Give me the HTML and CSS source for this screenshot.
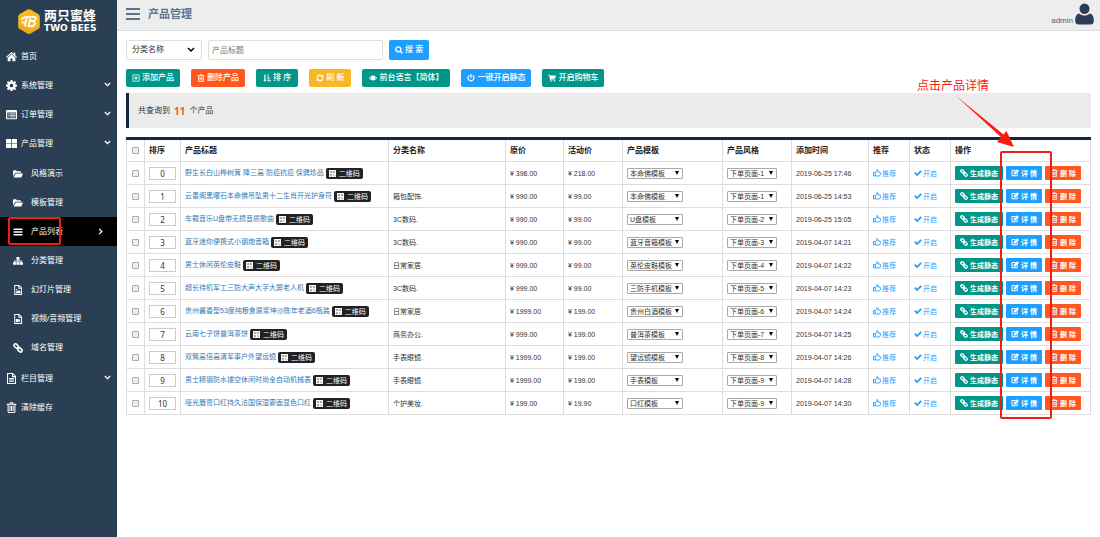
FILE: index.html
```html
<!DOCTYPE html>
<html lang="zh-CN">
<head>
<meta charset="utf-8">
<meta name="viewport" content="width=device-width, initial-scale=1">
<title>产品管理</title>
<link rel="stylesheet" href="styles.css">
</head>
<body>
<svg class="sprite" aria-hidden="true">
  <symbol id="i-home" viewBox="0 0 16 16"><path d="M8 1.500 0 8.600l1 1.100L8 3.600l7 6.100 1-1.100-2.500-2.200V2.300h-2.200v2.100zM8 4.900l-5.600 5V15h4.200v-4h2.800v4h4.200V9.900z"/></symbol>
  <symbol id="i-gear" viewBox="0 0 16 16"><path fill-rule="evenodd" d="M6.700 0h2.600l.4 2.200 1.400.6L13 1.500l1.700 1.800-1.300 1.700.6 1.500 2 .3v2.500l-2 .4-.6 1.500 1.300 1.800-1.800 1.800-1.800-1.300-1.400.6-.4 2.100H6.700l-.4-2.100-1.400-.6-1.800 1.300-1.800-1.800 1.300-1.800L2 9.700l-2-.4V6.800l2-.3.6-1.500-1.300-1.700L3 1.500l1.900 1.300 1.400-.6zM8 5.300a2.700 2.700 0 1 0 0 5.400 2.700 2.700 0 0 0 0-5.400z"/></symbol>
  <symbol id="i-order" viewBox="0 0 16 16"><path fill-rule="evenodd" d="M1 1.500h14l1 1V14l-1 1H1l-1-1V2.500zm.5 3.500v8.500h13V5z"/><path opacity=".75" d="M2 6h2v1.700H2zM5 6h9v1.700H5zM2 8.400h2v1.700H2zM5 8.400h9v1.700H5zM2 10.800h2v1.700H2zM5 10.800h9v1.700H5z"/></symbol>
  <symbol id="i-grid" viewBox="0 0 16 16"><path d="M0 1.500h7.500v6H0zM8.500 1.500H16v6H8.500zM0 8.500h7.500v6H0zM8.500 8.500H16v6H8.500z"/></symbol>
  <symbol id="i-folder" viewBox="0 0 16 16"><path d="M0 11.500V3.200L1 2h4l1 1.700h6l1 1V6H4.500L3 7z"/><path d="M4.500 7.200H16l-2.800 6.300H.8z"/></symbol>
  <symbol id="i-bars" viewBox="0 0 16 16"><path d="M1 2.500h14v2.300H1zM1 6.900h14v2.300H1zM1 11.300h14v2.300H1z"/></symbol>
  <symbol id="i-tree" viewBox="0 0 16 16"><path d="M5.500 1.500h5v4.300H8.700v1.500H14v2.500h2V14h-5V9.800h1.700V8.600H8.700v1.200h1.800V14h-5V9.800h1.800V8.600h-4v1.200H5V14H0V9.800h2V7.300h5.300V5.800H5.500z"/></symbol>
  <symbol id="i-image" viewBox="0 0 16 16"><path fill-rule="evenodd" d="M2 0h8l4.500 4.500V16H2zm1.500 1.500v13H13V6H8.500V1.500zM10 2v2.500h2.500z"/><path d="M4.500 13v-2l1.600-1.500 1.200 1L9.800 8l2.200 2.500V13zM6 6.500a1.200 1.200 0 1 1-.1 2.400A1.200 1.200 0 0 1 6 6.500z"/></symbol>
  <symbol id="i-video" viewBox="0 0 16 16"><path fill-rule="evenodd" d="M2 0h8l4.500 4.500V16H2zm1.500 1.500v13H13V6H8.500V1.500zM10 2v2.500h2.500z"/><path d="M4.500 8h4.300v1.700L11.500 8v5l-2.700-1.700V13H4.500z"/></symbol>
  <symbol id="i-link" viewBox="0 0 16 16"><g fill="none" stroke="currentColor" stroke-width="2.500"><rect x="1.200" y="2.300" width="7.400" height="5" rx="2.200" transform="rotate(42 5 5)"/><rect x="7.400" y="8.500" width="7.400" height="5" rx="2.200" transform="rotate(42 11 11)"/><path d="m6.300 6.300 3.500 3.500"/></g></symbol>
  <symbol id="i-doc" viewBox="0 0 16 16"><path fill-rule="evenodd" d="M1.500 0H10l4.500 4.500V16h-13zM3 1.500v13h10V6H8.700V1.500zM10.200 2v2.500h2.500z"/><path d="M4.500 7.300h7v1.300h-7zM4.500 9.600h7v1.300h-7zM4.500 11.900h7v1.300h-7z"/></symbol>
  <symbol id="i-trash" viewBox="0 0 16 16"><path fill-rule="evenodd" d="M5 2.500 5.800.5h4.400l.8 2h4V4h-1.300v10.500l-1.200 1.500h-9l-1.200-1.500V4H1V2.500zm1.700 0h2.600L9 1.900H7zM3.800 4v10.500h8.400V4z"/><path d="M5 5.500h1.500V13H5zM7.300 5.500h1.500V13H7.300zM9.600 5.500h1.500V13H9.600z"/></symbol>
  <symbol id="i-plus" viewBox="0 0 16 16"><path fill-rule="evenodd" d="M2 1h12l1 1v12l-1 1H2l-1-1V2zm.6 1.600v10.800h10.800V2.600z"/><path d="M7.200 4h1.600v3.200H12v1.600H8.800V12H7.200V8.800H4V7.200h3.200z"/></symbol>
  <symbol id="i-sort" viewBox="0 0 16 16"><path d="M2.700 1h2.300v10.300h2.500L3.900 15.700.2 11.300h2.500zM8.500 1h3v2h-3zM8.500 4.800h4v2h-4zM8.500 8.600h5.500v2H8.500zM8.500 12.400H16v2H8.500z"/></symbol>
  <symbol id="i-refresh" viewBox="0 0 16 16"><path d="M.8 7A7.300 7.300 0 0 1 13 2.800L15 1v5.800H9.200l2-2.100A4.800 4.800 0 0 0 3.500 7zM15.200 9A7.300 7.300 0 0 1 3 13.200L1 15V9.200h5.800l-2 2.100A4.800 4.800 0 0 0 12.500 9z"/></symbol>
  <symbol id="i-eye" viewBox="0 0 16 16"><path fill-rule="evenodd" d="M0 8c2-3.200 4.700-5 8-5s6 1.800 8 5c-2 3.200-4.700 5-8 5s-6-1.800-8-5zm1.800 0c.9 1.300 2 2.300 3.200 2.900A4 4 0 0 1 5 5c-1.300.6-2.400 1.700-3.200 3zm12.400 0A8 8 0 0 0 11 5a4 4 0 0 1 0 5.900c1.300-.6 2.400-1.600 3.200-2.900z"/></symbol>
  <symbol id="i-power" viewBox="0 0 16 16"><path d="M6.800 0h2.400v8H6.800z"/><path d="M4.500 1.300v3a4.800 4.800 0 1 0 7 0v-3a7.200 7.200 0 1 1-7 0z"/></symbol>
  <symbol id="i-cart" viewBox="0 0 16 16"><path d="M0 1.500h3.300l.5 1.700H16L14.600 9l-9 1 .2 1.200h8.700v1.500H4.500L2.200 3H0z"/><circle cx="5.800" cy="14" r="1.500"/><circle cx="13" cy="14" r="1.500"/></symbol>
  <symbol id="i-search" viewBox="0 0 16 16"><path fill-rule="evenodd" d="M6.700.3a6.400 6.400 0 0 1 5.400 9.800l3.800 3.800-2 2-3.800-3.800A6.400 6.400 0 1 1 6.700.3zm0 2.600a3.800 3.800 0 1 0 0 7.600 3.800 3.800 0 0 0 0-7.600z"/></symbol>
  <symbol id="i-thumb" viewBox="0 0 16 16"><path fill="none" stroke="currentColor" stroke-width="1.800" d="M1 7h3.500v7H1zM4.500 7.500C7 5.500 7.500 4 7.800 1.200c2 0 2.700 1.800 1.700 4.800H14l1 1.500-.7 4.500-1.300 2H7l-2.500-1"/></symbol>
  <symbol id="i-check" viewBox="0 0 16 16"><path d="m.3 8.500 2.500-2.500 3.400 3.400L13.200 2.300l2.500 2.500-9.500 9.500z"/></symbol>
  <symbol id="i-edit" viewBox="0 0 16 16"><path d="M1 3.500 2.500 2H10L8.300 3.800H3v8.700h8.700V9.500l1.800-1.800V13L12 14.500H2.500L1 13z"/><path d="m5.500 7.500 7-7L16 4l-7 7H5.500z"/></symbol>
  <symbol id="i-qr" viewBox="0 0 16 16"><path fill="#fff" d="M0 0h16v16H0z"/><path fill="#999" d="M2 2h5v5H2zM9 2h5v5H9zM2 9h5v5H2zM9 9h2v2H9zM12 11h2v3h-2zM9 13h2v1H9z"/><path fill="#eee" d="M3.500 3.500h2v2h-2zM10.500 3.500h2v2h-2zM3.500 10.500h2v2h-2z"/></symbol>
  <symbol id="i-down" viewBox="0 0 16 16"><path fill="none" stroke="currentColor" stroke-width="3" d="m2 4.500 6 6 6-6"/></symbol>
  <symbol id="i-right" viewBox="0 0 16 16"><path fill="none" stroke="currentColor" stroke-width="3" d="m5 2 6 6-6 6"/></symbol>
</svg>

<div class="app">
  <aside class="sidebar">
    <div class="logo">
      <svg class="logo-mark" viewBox="0 0 22 25" aria-hidden="true">
        <path fill="#f9b625" d="M9.500.6q1.500-.8 3 0l7.700 4.300q1.600 1 1.600 2.700v9.800q0 1.700-1.600 2.700l-7.700 4.300q-1.500.8-3 0l-7.700-4.300q-1.600-1-1.600-2.700V7.600q0-1.700 1.600-2.700z"/>
        <path fill="#e89b1c" d="m.2 15 0 2.400q0 1.700 1.600 2.700l7.700 4.300q1.500.8 3 0l7.700-4.300q1.600-1 1.600-2.700L12 21z" opacity=".6"/>
        <path fill="none" stroke="#fff" stroke-width="1.800" stroke-linecap="round" stroke-linejoin="round" d="M3.800 10c1.500-2 3-2.200 5-2.200h7.500c2.600.2 2.200 3.500-.8 4.200h-2.300 1.600c3.300.4 2.500 5-1.600 5.200h-2.800l1.800-7.200M8.800 8.500 7 16.500M4.800 13.500h2"/>
      </svg>
      <div class="logo-text"><span class="logo-cn">两只蜜蜂</span><span class="logo-en">TWO BEES</span></div>
    </div>
    <nav aria-label="主菜单">
      <ul class="menu">
        <li><a class="menu-link" href="#"><svg class="icon"><use href="#i-home"/></svg><span>首页</span></a></li>
        <li><a class="menu-link" href="#"><svg class="icon"><use href="#i-gear"/></svg><span>系统管理</span><svg class="caret"><use href="#i-down"/></svg></a></li>
        <li><a class="menu-link" href="#"><svg class="icon"><use href="#i-order"/></svg><span>订单管理</span><svg class="caret"><use href="#i-down"/></svg></a></li>
        <li><a class="menu-link" href="#"><svg class="icon"><use href="#i-grid"/></svg><span>产品管理</span><svg class="caret"><use href="#i-down"/></svg></a>
          <ul class="submenu">
            <li><a class="menu-link" href="#"><svg class="icon"><use href="#i-folder"/></svg><span>风格演示</span></a></li>
            <li><a class="menu-link" href="#"><svg class="icon"><use href="#i-folder"/></svg><span>模板管理</span></a></li>
            <li class="active"><a class="menu-link" href="#" aria-current="page"><svg class="icon"><use href="#i-bars"/></svg><span>产品列表</span><svg class="caret"><use href="#i-right"/></svg></a><span class="mark mark-menu"></span></li>
            <li><a class="menu-link" href="#"><svg class="icon"><use href="#i-tree"/></svg><span>分类管理</span></a></li>
            <li><a class="menu-link" href="#"><svg class="icon"><use href="#i-image"/></svg><span>幻灯片管理</span></a></li>
            <li><a class="menu-link" href="#"><svg class="icon"><use href="#i-video"/></svg><span>视频/音频管理</span></a></li>
            <li><a class="menu-link" href="#"><svg class="icon"><use href="#i-link"/></svg><span>域名管理</span></a></li>
          </ul>
        </li>
        <li><a class="menu-link" href="#"><svg class="icon"><use href="#i-doc"/></svg><span>栏目管理</span><svg class="caret"><use href="#i-down"/></svg></a></li>
        <li><a class="menu-link" href="#"><svg class="icon"><use href="#i-trash"/></svg><span>清除缓存</span></a></li>
      </ul>
    </nav>
  </aside>

  <div class="page">
    <header class="topbar">
      <button class="toggle" type="button" aria-label="切换菜单"><span></span><span></span><span></span></button>
      <h1>产品管理</h1>
      <a class="user" href="#"><span>admin</span>
        <svg class="avatar" viewBox="0 0 20 22" aria-hidden="true"><path d="M10 0a5.300 5.500 0 1 1 0 11A5.300 5.500 0 0 1 10 0zM4.500 10.500C6 12 8 12.700 10 12.700s4-.7 5.500-2.200c3 .3 4.300 3.500 4.300 7.500 0 2.500-1 4-3.500 4H3.700C1.200 22 .2 20.500.2 18c0-4 1.300-7.200 4.300-7.500z"/></svg>
      </a>
    </header>

    <main class="content">
      <form class="search">
        <select class="field category" aria-label="分类名称"><option>分类名称</option></select>
        <input class="field keyword" type="text" placeholder="产品标题" aria-label="产品标题">
        <button class="btn blue" type="button"><svg class="icon"><use href="#i-search"/></svg>搜 索</button>
      </form>
      <div class="toolbar">
        <button class="btn green" type="button"><svg class="icon"><use href="#i-plus"/></svg>添加产品</button>
        <button class="btn red" type="button"><svg class="icon"><use href="#i-trash"/></svg>删除产品</button>
        <button class="btn green wide" type="button"><svg class="icon"><use href="#i-sort"/></svg>排 序</button>
        <button class="btn yellow wide" type="button"><svg class="icon"><use href="#i-refresh"/></svg>刷 新</button>
        <button class="btn green wide" type="button"><svg class="icon"><use href="#i-eye"/></svg>前台语言【简体】</button>
        <button class="btn blue" type="button"><svg class="icon"><use href="#i-power"/></svg>一键开启静态</button>
        <button class="btn green" type="button"><svg class="icon"><use href="#i-cart"/></svg>开启购物车</button>
      </div>
      <p class="summary">共查询到 <strong>11</strong> 个产品</p>

      <table class="products">
        <colgroup>
          <col class="c-check"><col class="c-order"><col class="c-title"><col class="c-cat"><col class="c-price"><col class="c-sale"><col class="c-tpl"><col class="c-style"><col class="c-date"><col class="c-rec"><col class="c-state"><col class="c-ops">
        </colgroup>
        <thead>
          <tr><th class="center"><input type="checkbox" aria-label="全选"></th><th>排序</th><th>产品标题</th><th>分类名称</th><th>原价</th><th>活动价</th><th>产品模板</th><th>产品风格</th><th>添加时间</th><th>推荐</th><th>状态</th><th>操作</th></tr>
        </thead>
        <tbody id="rows"></tbody>
      </table>
    </main>
  </div>

  <div class="mark mark-column"></div>
  <div class="note">
    <p>点击产品详情</p>
    <svg class="arrow" viewBox="0 0 60 53" aria-hidden="true"><path d="M.5.5 46 42l-4 5 17 5-7.500-16-3 3.500z"/></svg>
  </div>
</div>
<script src="rows.js"></script>
</body>
</html>
```

FILE: rows.js
```js
const products = [
  ["野生长白山桦树茸 降三高 防癌抗癌 保健珍品", "", "398.00", "218.00", "本命佛模板", 1, "2019-06-25 17:46"],
  ["云善阁黑曜石本命佛吊坠男十二生肖开光护身符", "箱包配饰.", "990.00", "99.00", "本命佛模板", 1, "2019-06-25 14:53"],
  ["车载音乐U盘带无损音质歌曲", "3C数码.", "990.00", "99.00", "U盘模板", 2, "2019-06-25 15:05"],
  ["蓝牙迷你便携式小钢炮音箱", "3C数码.", "990.00", "99.00", "蓝牙音箱模板", 3, "2019-04-07 14:21"],
  ["男士休闲英伦皮鞋", "日常家居.", "999.00", "99.00", "英伦皮鞋模板", 4, "2019-04-07 14:22"],
  ["超长待机军工三防大声大字大屏老人机", "3C数码.", "999.00", "99.00", "三防手机模板", 5, "2019-04-07 14:23"],
  ["贵州酱香型53度纯粮食原浆坤沙陈年老酒6瓶装", "日常家居.", "1999.00", "199.00", "贵州白酒模板", 6, "2019-04-07 14:24"],
  ["云南七子饼普洱茶饼", "商务办公.", "999.00", "199.00", "普洱茶模板", 7, "2019-04-07 14:25"],
  ["双筒高倍高清军事户外望远镜", "手表眼镜.", "1999.00", "199.00", "望远镜模板", 8, "2019-04-07 14:26"],
  ["男士精钢防水镂空休闲时尚全自动机械表", "手表眼镜.", "1999.00", "199.00", "手表模板", 9, "2019-04-07 14:28"],
  ["哑光唇膏口红持久法国保湿雾面显色口红", "个护美妆.", "199.00", "19.90", "口红模板", 9, "2019-04-07 14:30"]
];

const icon = name => `<svg class="icon" aria-hidden="true"><use href="#i-${name}"/></svg>`;

document.getElementById("rows").innerHTML = products.map(
  ([title, category, price, sale, template, style, date], i) => `
  <tr>
    <td class="center"><input type="checkbox" aria-label="选择 ${title}"></td>
    <td><input class="order" type="text" value="${i}" aria-label="排序"></td>
    <td><a href="#">${title}</a> <button class="qr" type="button">${icon("qr")}二维码</button></td>
    <td>${category}</td>
    <td>¥ ${price}</td>
    <td>¥ ${sale}</td>
    <td><select class="pick pick-template" aria-label="产品模板"><option>${template}</option></select></td>
    <td><select class="pick pick-style" aria-label="产品风格"><option>下单页面-${style}</option></select></td>
    <td>${date}</td>
    <td><a class="flag" href="#">${icon("thumb")}推荐</a></td>
    <td><a class="flag" href="#">${icon("check")}开启</a></td>
    <td><div class="ops">
      <button class="btn small green" type="button">${icon("link")}生成静态</button>
      <button class="btn small blue" type="button">${icon("edit")}详 情</button>
      <button class="btn small red" type="button">${icon("trash")}删 除</button>
    </div></td>
  </tr>`).join("");
```

FILE: styles.css
```css
* { box-sizing: border-box; }

body {
  margin: 0;
  background: #fff;
  color: #333;
  font: 8px/12px "Liberation Sans", "Noto Sans CJK SC", sans-serif;
}

ul { margin: 0; padding: 0; list-style: none; }
a { color: inherit; text-decoration: none; }
button, input, select { margin: 0; font: inherit; color: inherit; }
button { cursor: pointer; }

.sprite { position: absolute; width: 0; height: 0; }
.icon { flex: none; width: 8px; height: 8px; fill: currentColor; }

.app { position: relative; display: flex; min-height: 100vh; }

/* Sidebar */
.sidebar { flex: none; width: 117px; background: #2a3f54; color: #fff; }
.logo { display: flex; align-items: center; gap: 4px; height: 42px; padding-left: 18px; }
.logo-mark { width: 22px; height: 25px; }
.logo-text { display: flex; flex-direction: column; gap: 2px; }
.logo-cn { font-size: 13px; line-height: 13px; font-weight: 700; }
.logo-en { font: 700 9px/9px "DejaVu Sans", sans-serif; }

.menu-link { display: flex; align-items: center; gap: 4px; height: 29px; padding: 0 6px; }
.menu .icon { width: 11px; height: 11px; }
.menu .caret { width: 7px; height: 7px; margin: 0 0 3px auto; }
.submenu { padding: 1px 0 2px; }
.submenu .menu-link { gap: 8px; padding: 0 13px; }
.menu .submenu .icon { width: 10px; height: 10px; }
.menu .submenu .caret { margin-bottom: 0; }
.active { position: relative; background: #000; }

/* Top bar */
.page { flex: 1; min-width: 0; }
.topbar {
  display: flex; align-items: center; gap: 8px;
  height: 31px; padding: 0 6px 2px 9px;
  background: #ededed; border-bottom: 1px solid #d9dee4;
}
.toggle { display: flex; flex-direction: column; gap: 3px; width: 14px; padding: 0; border: 0; background: none; }
.toggle span { height: 2px; background: #5a738e; }
h1 { margin: 0; font-size: 11px; line-height: 16px; font-weight: 700; color: #5a738e; }
.user { display: flex; align-items: center; gap: 2px; margin-left: auto; color: #515f77; }
.user span { padding-top: 14px; }
.avatar { width: 19px; height: 22px; fill: #2a3f54; }

/* Search and toolbar */
.content { padding: 9px 9px 20px; }
.search { display: flex; gap: 6px; }
.field { height: 20px; border: 1px solid #ddd; border-radius: 2px; background-color: #fff; outline: 0; }
.category {
  width: 76px; padding: 0 5px; appearance: none;
  background: #fff url("data:image/svg+xml,%3Csvg xmlns='http://www.w3.org/2000/svg' viewBox='0 0 8 6'%3E%3Cpath d='m1 1 3 3 3-3' fill='none' stroke='%23000' stroke-width='1.500'/%3E%3C/svg%3E") no-repeat right 6px center / 8px 6px;
}
.keyword { width: 175px; padding: 0 3px; }
.keyword::placeholder { color: #777; }

.btn {
  display: flex; align-items: center; justify-content: center; gap: 2px;
  height: 18px; padding: 0 6px; border: 0; border-radius: 2px;
  color: #fff; font-weight: 500; white-space: nowrap;
}
.search .btn { height: 20px; }
.wide { padding: 0 7px; }
.green { background: #009688; }
.red { background: #ff5722; }
.yellow { background: #f7b824; }
.blue { background: #1e9fff; }
.toolbar { display: flex; flex-wrap: wrap; gap: 11px; margin-top: 9px; }

.summary {
  display: flex; align-items: center; gap: 4px;
  min-height: 35px; margin: 6px 0 9px; padding: 0 9px;
  background: #ececec; border-left: 3px solid #14293f;
}
.summary strong { color: #ff5722; font-size: 10px; font-family: "Noto Sans", sans-serif; }

/* Product table */
.products {
  width: 100%; table-layout: fixed; border-collapse: collapse;
  font-size: 7px; line-height: 11px; border-top: 3px solid #14293f;
}
.c-check { width: 18px; }
.c-order { width: 36px; }
.c-cat { width: 117px; }
.c-price { width: 58px; }
.c-sale { width: 59px; }
.c-tpl { width: 100px; }
.c-style { width: 69px; }
.c-date { width: 77px; }
.c-rec { width: 41px; }
.c-state { width: 41px; }
.c-ops { width: 140px; }
.products th, .products td {
  height: 23px; padding: 0 4px; border: 1px solid #ddd;
  text-align: left; vertical-align: middle; white-space: nowrap;
}
.products th { font-size: 8px; font-weight: 700; color: #222; border-top: 0; }
.products td a { color: #337ab7; }
.products .center { padding: 0; text-align: center; }
.products input[type="checkbox"] {
  display: block; width: 7px; height: 7px; margin: 0 auto; appearance: none;
  border: 1px solid #aaa; border-radius: 1px; background: #eee;
}
.products input[type="checkbox"]:checked { background: #1e9fff; }
.order {
  display: block; width: 27px; height: 13px; padding: 0; border: 1px solid #ccc;
  text-align: center; font: 8px/11px "Noto Sans", sans-serif;
}
.qr {
  display: inline-flex; align-items: center; gap: 3px; height: 11px; padding: 0 3px;
  border: 0; border-radius: 2px; background: #222; color: #fff; vertical-align: middle;
}
.qr .icon { width: 7px; height: 7px; }
.pick {
  display: block; height: 11px; padding: 0 2px; appearance: none;
  border: 1px solid #a9a9a9; border-radius: 1px; line-height: 9px;
  background: #fff url("data:image/svg+xml,%3Csvg xmlns='http://www.w3.org/2000/svg' viewBox='0 0 4 4'%3E%3Cpath d='M0 0h4L2 4z'/%3E%3C/svg%3E") no-repeat right 3px center / 4px 4px;
}
.pick-template { width: 56px; }
.pick-style { width: 50px; }
.products .flag { display: flex; align-items: center; gap: 1px; color: #1e9fff; }
.ops { display: flex; gap: 3px; }
.btn.small { height: 14px; padding: 0 5px; border-radius: 1px; font-weight: 700; }

/* Annotations laid over the page */
.mark { position: absolute; border: 2px solid #f21c14; border-radius: 2px; pointer-events: none; }
.mark-menu { top: 0; left: 8px; width: 53px; height: 28px; }
.mark-column { top: 151px; right: 48px; width: 52px; height: 268px; }
.note { position: absolute; top: 78px; right: 85px; width: 98px; color: #ff1a10; pointer-events: none; }
.note p { margin: 0; font-size: 12px; line-height: 16px; }
.arrow { display: block; width: 60px; height: 53px; margin: 1px 0 0 auto; fill: #ff1a10; }
```
